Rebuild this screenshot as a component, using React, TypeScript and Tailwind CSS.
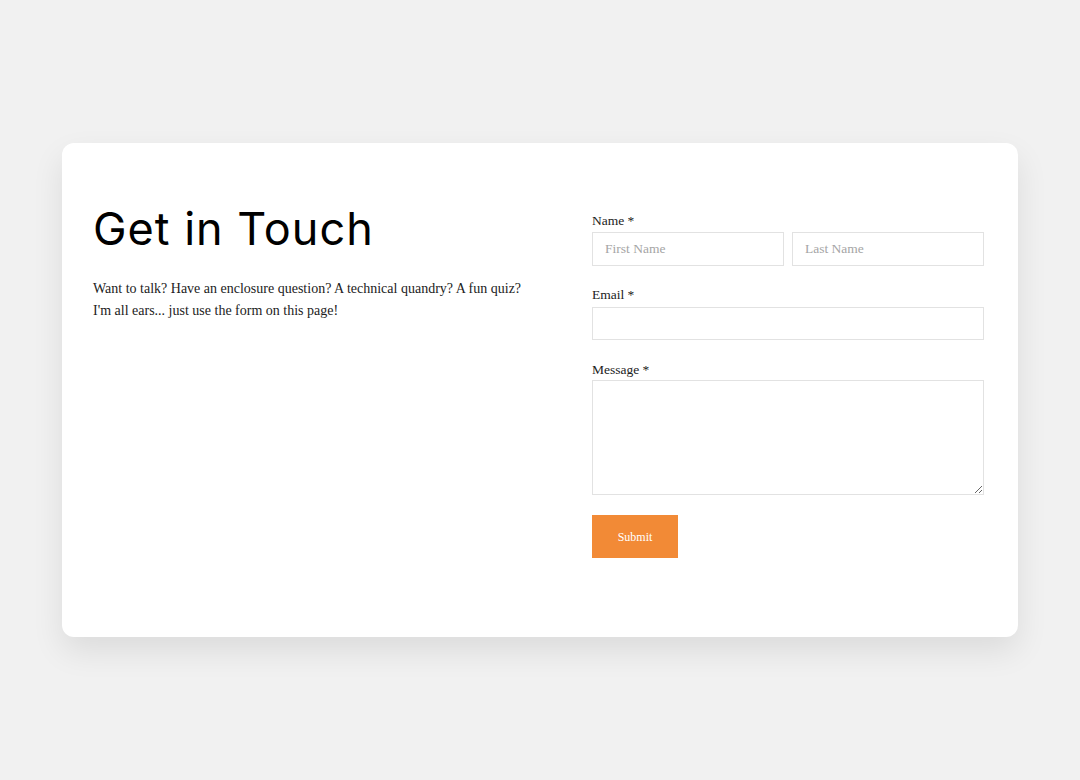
import React from "react";

export default function App() {
  const serif = { fontFamily: '"Liberation Serif", "DejaVu Serif", serif' };
  return (
    <div className="min-h-[780px] w-full bg-[#f1f1f1] flex items-center justify-center">
      <div className="w-[956px] h-[494px] bg-white rounded-[12px] shadow-[0_14px_32px_rgba(0,0,0,0.09)] flex pl-[31px] pr-[34px] pt-[60px]">
        <div className="w-[468px] flex flex-col">
          <h1 className="text-[45px] leading-[52px] text-black font-normal tracking-[1px]" style={{ fontFamily: 'Inter, "Open Sans", sans-serif' }}>
            Get in Touch
          </h1>
          <p className="mt-[23px] text-[14px] leading-[22px] text-[#222]" style={serif}>
            Want to talk? Have an enclosure question? A technical quandry? A fun quiz?
            <br />
            I'm all ears... just use the form on this page!
          </p>
        </div>
        <div className="ml-[31px] w-[392px] flex flex-col pt-[9px]" style={serif}>
          <label className="text-[13.5px] leading-[18px] text-[#222]">Name *</label>
          <div className="mt-[2px] grid grid-cols-2 gap-[8px]">
            <input
              placeholder="First Name"
              className="h-[34px] border border-[#e2e2e2] px-[12px] text-[13.5px] placeholder:text-[#a5a5a5] outline-none"
            />
            <input
              placeholder="Last Name"
              className="h-[34px] border border-[#e2e2e2] px-[12px] text-[13.5px] placeholder:text-[#a5a5a5] outline-none"
            />
          </div>
          <label className="mt-[20px] text-[13.5px] leading-[18px] text-[#222]">Email *</label>
          <input className="mt-[3px] h-[33px] border border-[#e2e2e2] px-[12px] text-[13.5px] outline-none" />
          <label className="mt-[21px] text-[13.5px] leading-[18px] text-[#222]">Message *</label>
          <textarea className="mt-[1px] h-[115px] border border-[#e2e2e2] px-[12px] text-[13.5px] outline-none resize-y" />
          <button className="mt-[20px] w-[86px] h-[43px] bg-[#f28a36] text-white text-[12px]" style={serif}>
            Submit
          </button>
        </div>
      </div>
    </div>
  );
}
